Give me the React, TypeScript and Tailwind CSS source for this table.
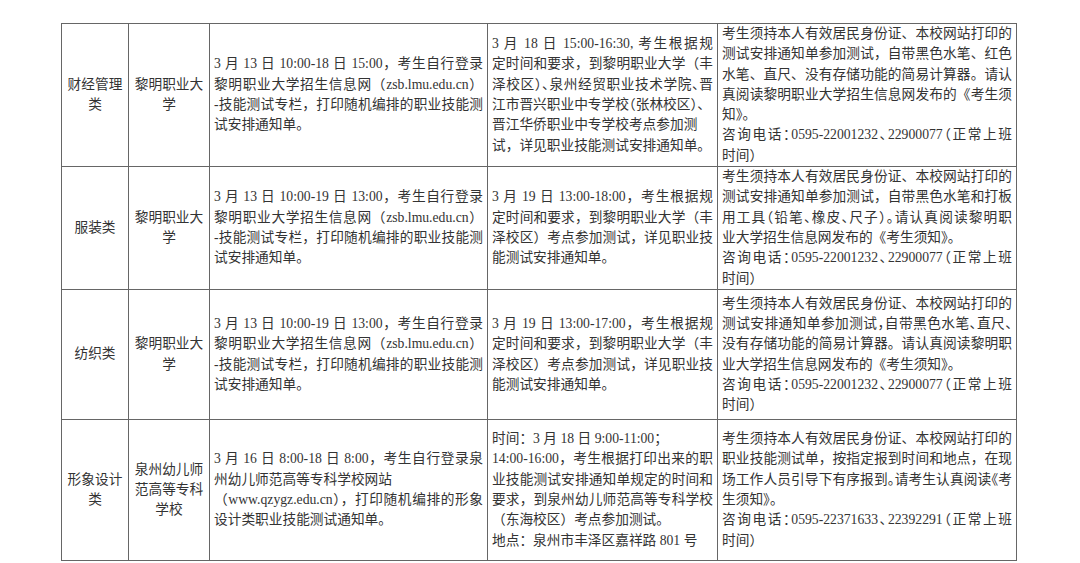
type Para = string[];

type Row = {
  major: string[];
  school: string[];
  print: Para[];
  exam: Para[];
  notes: Para[];
};

// "~" prefix squeezes punctuation to half width so a long line keeps to one row
const ROWS: Row[] = [
  {
    major: ["财经管理", "类"],
    school: ["黎明职业大", "学"],
    print: [
      [
        "3 月 13 日 10:00-18 日 15:00，考生自行登录",
        "黎明职业大学招生信息网（zsb.lmu.edu.cn）",
        "-技能测试专栏，打印随机编排的职业技能测",
        "试安排通知单。",
      ],
    ],
    exam: [
      [
        "3 月 18 日 15:00-16:30, 考生根据规",
        "定时间和要求，到黎明职业大学（丰",
        "~泽校区）、泉州经贸职业技术学院、晋",
        "~江市晋兴职业中专学校（张林校区）、",
      ],
      ["晋江华侨职业中专学校考点参加测"],
      ["试，详见职业技能测试安排通知单。"],
    ],
    notes: [
      [
        "考生须持本人有效居民身份证、本校网站打印的",
        "测试安排通知单参加测试，自带黑色水笔、红色",
        "水笔、直尺、没有存储功能的简易计算器。请认",
        "真阅读黎明职业大学招生信息网发布的《考生须",
        "知》。",
      ],
      ["~咨询电话：0595-22001232、22900077（正常上班", "时间）"],
    ],
  },
  {
    major: ["服装类"],
    school: ["黎明职业大", "学"],
    print: [
      [
        "3 月 13 日 10:00-19 日 13:00，考生自行登录",
        "黎明职业大学招生信息网（zsb.lmu.edu.cn）",
        "-技能测试专栏，打印随机编排的职业技能测",
        "试安排通知单。",
      ],
    ],
    exam: [
      [
        "3 月 19 日 13:00-18:00，考生根据规",
        "定时间和要求，到黎明职业大学（丰",
        "泽校区）考点参加测试，详见职业技",
        "能测试安排通知单。",
      ],
    ],
    notes: [
      [
        "考生须持本人有效居民身份证、本校网站打印的",
        "测试安排通知单参加测试，自带黑色水笔和打板",
        "~用工具（铅笔、橡皮、尺子）。请认真阅读黎明职",
        "业大学招生信息网发布的《考生须知》。",
      ],
      ["~咨询电话：0595-22001232、22900077（正常上班", "时间）"],
    ],
  },
  {
    major: ["纺织类"],
    school: ["黎明职业大", "学"],
    print: [
      [
        "3 月 13 日 10:00-19 日 13:00，考生自行登录",
        "黎明职业大学招生信息网（zsb.lmu.edu.cn）",
        "-技能测试专栏，打印随机编排的职业技能测",
        "试安排通知单。",
      ],
    ],
    exam: [
      [
        "3 月 19 日 13:00-17:00，考生根据规",
        "定时间和要求，到黎明职业大学（丰",
        "泽校区）考点参加测试，详见职业技",
        "能测试安排通知单。",
      ],
    ],
    notes: [
      [
        "考生须持本人有效居民身份证、本校网站打印的",
        "~测试安排通知单参加测试，自带黑色水笔、直尺、",
        "没有存储功能的简易计算器。请认真阅读黎明职",
        "业大学招生信息网发布的《考生须知》。",
      ],
      ["~咨询电话：0595-22001232、22900077（正常上班", "时间）"],
    ],
  },
  {
    major: ["形象设计", "类"],
    school: ["泉州幼儿师", "范高等专科", "学校"],
    print: [
      ["3 月 16 日 8:00-18 日 8:00，考生自行登录泉", "州幼儿师范高等专科学校网站"],
      ["（www.qzygz.edu.cn），打印随机编排的形象", "设计类职业技能测试通知单。"],
    ],
    exam: [
      ["时间：3 月 18 日 9:00-11:00；"],
      [
        "14:00-16:00，考生根据打印出来的职",
        "业技能测试安排通知单规定的时间和",
        "要求，到泉州幼儿师范高等专科学校",
        "（东海校区）考点参加测试。",
      ],
      ["地点：泉州市丰泽区嘉祥路 801 号"],
    ],
    notes: [
      [
        "考生须持本人有效居民身份证、本校网站打印的",
        "职业技能测试单，按指定报到时间和地点，在现",
        "~场工作人员引导下有序报到。请考生认真阅读《考",
        "生须知》。",
      ],
      ["~咨询电话：0595-22371633、22392291（正常上班", "时间）"],
    ],
  },
];

function Centered({ lines }: { lines: string[] }) {
  return (
    <div className="flex flex-col items-center justify-center bg-white px-1 text-center">
      {lines.map((l) => (
        <div key={l}>{l}</div>
      ))}
    </div>
  );
}

function Block({ paras }: { paras: Para[] }) {
  return (
    <div className="flex flex-col justify-center bg-white px-1">
      {paras.map((p, pi) =>
        p.map((raw, li) => {
          const squeeze = raw.startsWith("~");
          const text = squeeze ? raw.slice(1) : raw;
          const last = li === p.length - 1;
          return (
            <div
              key={`${pi}-${li}`}
              className={
                (last ? "text-left" : "text-justify [text-align-last:justify]") +
                (squeeze ? " [font-feature-settings:'halt']" : "")
              }
            >
              {text}
            </div>
          );
        }),
      )}
    </div>
  );
}

export default function App() {
  return (
    <div className="h-[563px] w-[1080px] bg-white pl-[61px] pt-[23px] font-['Liberation_Serif','Noto_Sans_CJK_SC',serif] text-[13.7px] leading-[20.3px] text-[#333]">
      <div className="grid w-fit grid-cols-[66px_80px_277px_229px_298px] grid-rows-[142px_122px_129px_140px] gap-px border border-[#666] bg-[#666]">
        {ROWS.map((r, i) => (
          <div key={i} className="contents">
            <Centered lines={r.major} />
            <Centered lines={r.school} />
            <Block paras={r.print} />
            <Block paras={r.exam} />
            <Block paras={r.notes} />
          </div>
        ))}
      </div>
    </div>
  );
}
